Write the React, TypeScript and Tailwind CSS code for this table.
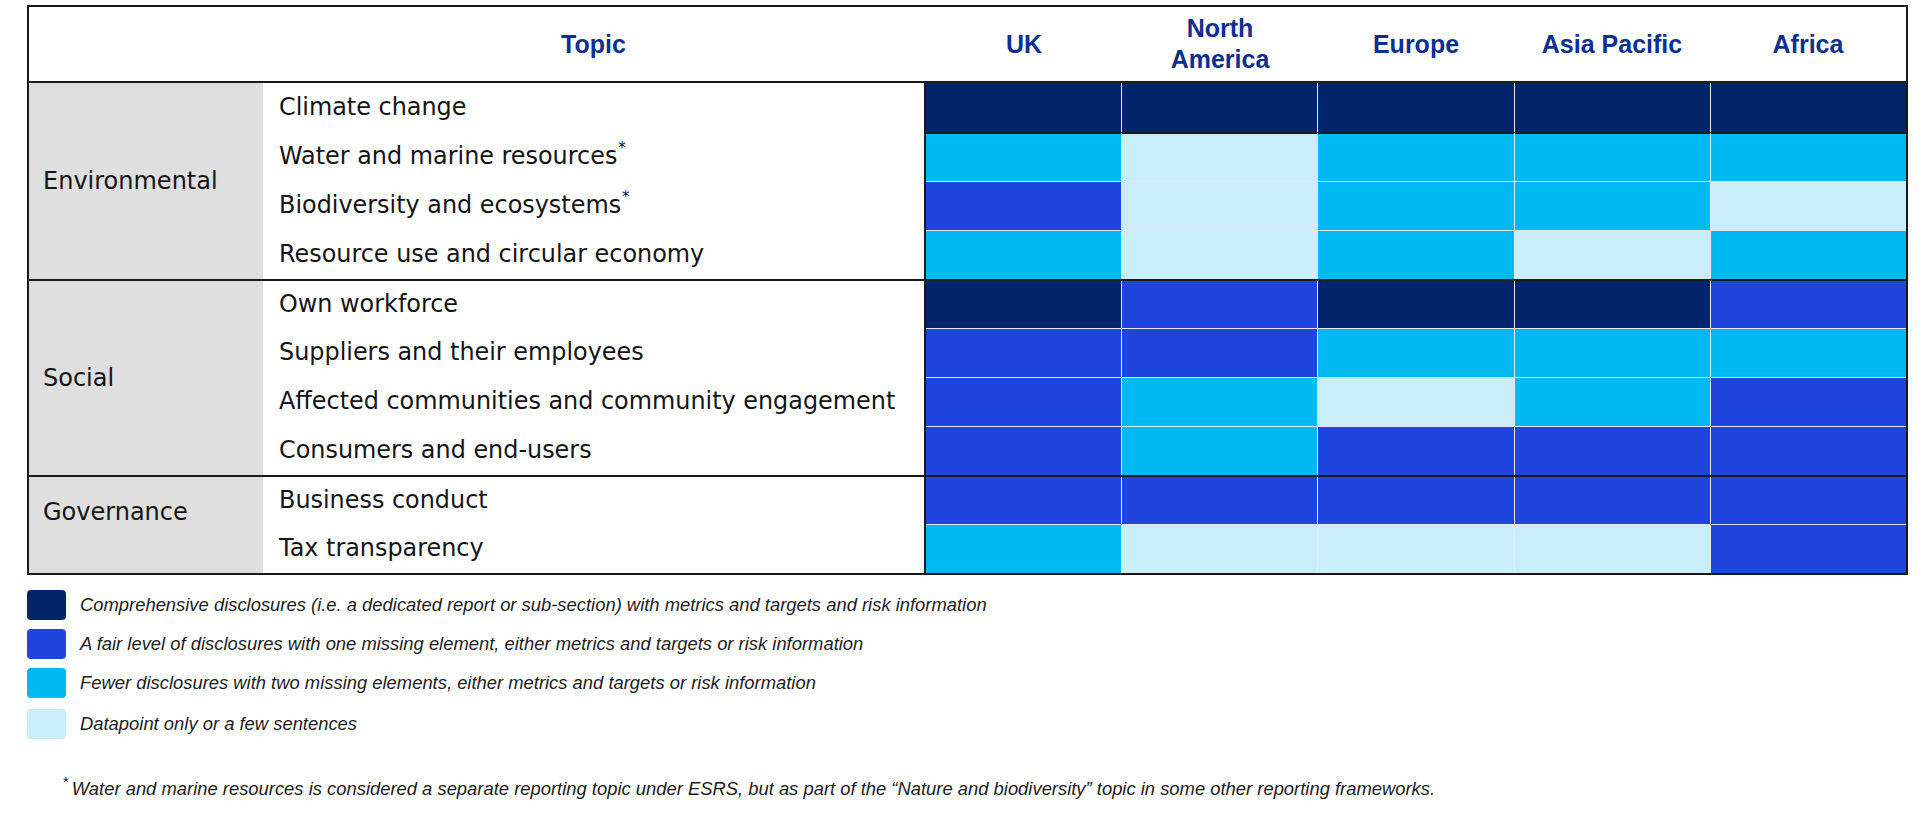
const NAVY = "bg-[#01246b]";
const ROYAL = "bg-[#1f45de]";
const CYAN = "bg-[#00b8f2]";
const LIGHT = "bg-[#c9eefa]";

const shade: Record<string, string> = { N: NAVY, R: ROYAL, C: CYAN, L: LIGHT };

const regions = ["UK", "North America", "Europe", "Asia Pacific", "Africa"];

const groups = [
  {
    name: "Environmental",
    nameClass: "items-center",
    rows: [
      { topic: "Climate change", cells: "NNNNN", star: false },
      { topic: "Water and marine resources", cells: "CLCCC", star: true },
      { topic: "Biodiversity and ecosystems", cells: "RLCCL", star: true },
      { topic: "Resource use and circular economy", cells: "CLCLC", star: false },
    ],
  },
  {
    name: "Social",
    nameClass: "items-center",
    rows: [
      { topic: "Own workforce", cells: "NRNNR", star: false },
      { topic: "Suppliers and their employees", cells: "RRCCC", star: false },
      { topic: "Affected communities and community engagement", cells: "RCLCR", star: false },
      { topic: "Consumers and end-users", cells: "RCRRR", star: false },
    ],
  },
  {
    name: "Governance",
    nameClass: "items-center pb-[26px]",
    rows: [
      { topic: "Business conduct", cells: "RRRRR", star: false },
      { topic: "Tax transparency", cells: "CLLLR", star: false },
    ],
  },
];

const legend = [
  { color: NAVY, text: "Comprehensive disclosures (i.e. a dedicated report or sub-section) with metrics and targets and risk information", extra: "" },
  { color: ROYAL, text: "A fair level of disclosures with one missing element, either metrics and targets or risk information", extra: "" },
  { color: CYAN, text: "Fewer disclosures with two missing elements, either metrics and targets or risk information", extra: "" },
  { color: LIGHT, text: "Datapoint only or a few sentences", extra: "mt-[2px]" },
];

export default function App() {
  return (
    <div className="w-[1920px] h-[814px] bg-white overflow-hidden pt-[5px] pl-[27px] font-['Liberation_Sans',Arial,sans-serif]">
      {/* heat map table */}
      <div className="w-[1881px] border-2 border-[#1a1a1a]">
        <div className="flex h-[76px] border-b-2 border-[#1a1a1a] text-[25px] font-bold text-[#0d2f8f] leading-[31px]">
          <div className="w-[234px]" />
          <div className="w-[661px] flex items-center justify-center">Topic</div>
          <div className="w-[2px]" />
          <div className="flex w-[980px]">
            {regions.map((r) => (
              <div key={r} className="flex-1 flex items-center justify-center text-center">
                {r === "North America" ? (
                  <span>
                    North
                    <br />
                    America
                  </span>
                ) : (
                  r
                )}
              </div>
            ))}
          </div>
        </div>

        {groups.map((g, gi) => (
          <div key={g.name} className={`flex ${gi > 0 ? "border-t-2 border-[#1a1a1a]" : ""}`}>
            <div className={`w-[234px] bg-[#dfdfdf] flex pl-[14px] text-[24px] text-[#141414] font-['DejaVu_Sans',sans-serif] ${g.nameClass}`}>
              {g.name}
            </div>
            <div className="flex flex-col">
              {g.rows.map((row, ri) => (
                <div
                  key={row.topic}
                  className={`flex ${gi > 0 && ri === 0 ? "h-[47px]" : "h-[49px]"}`}
                >
                  <div className="w-[661px] bg-white flex items-center pl-[16px] text-[23.9px] text-[#141414] font-['DejaVu_Sans',sans-serif] whitespace-nowrap">
                    {row.topic}
                    {row.star && <span className="self-start mt-[5px] ml-[1px] text-[15px]">*</span>}
                  </div>
                  <div className="flex w-[982px] border-l-2 border-[#1a1a1a]">
                    {row.cells.split("").map((c, ci) => (
                      <div
                        key={ci}
                        className={`flex-1 ${shade[c]} ${ci > 0 ? "border-l border-l-[#e4edf6]" : ""} ${
                          ri > 0 ? (gi === 0 && ri === 1 ? "border-t-2 border-t-[#101820]" : "border-t border-t-[#dfe8f2]") : ""
                        }`}
                      />
                    ))}
                  </div>
                </div>
              ))}
            </div>
          </div>
        ))}
      </div>

      {/* legend */}
      <div className="flex flex-col gap-[9px] mt-[15px]">
        {legend.map((l) => (
          <div key={l.text} className={`flex items-center gap-[14px] ${l.extra}`}>
            <div className={`w-[39px] h-[30px] rounded-[4px] ${l.color}`} />
            <span className="italic text-[18.4px] text-[#1c1c1c]">{l.text}</span>
          </div>
        ))}
      </div>

      <div className="flex mt-[39px] pl-[36px] text-[#1c1c1c]">
        <span className="text-[15px] leading-none mt-[-4px] mr-[3px]">*</span>
        <span className="italic text-[18.4px] leading-[22px]">
          Water and marine resources is considered a separate reporting topic under ESRS, but as part of the “Nature and biodiversity” topic in some other reporting frameworks.
        </span>
      </div>
    </div>
  );
}
